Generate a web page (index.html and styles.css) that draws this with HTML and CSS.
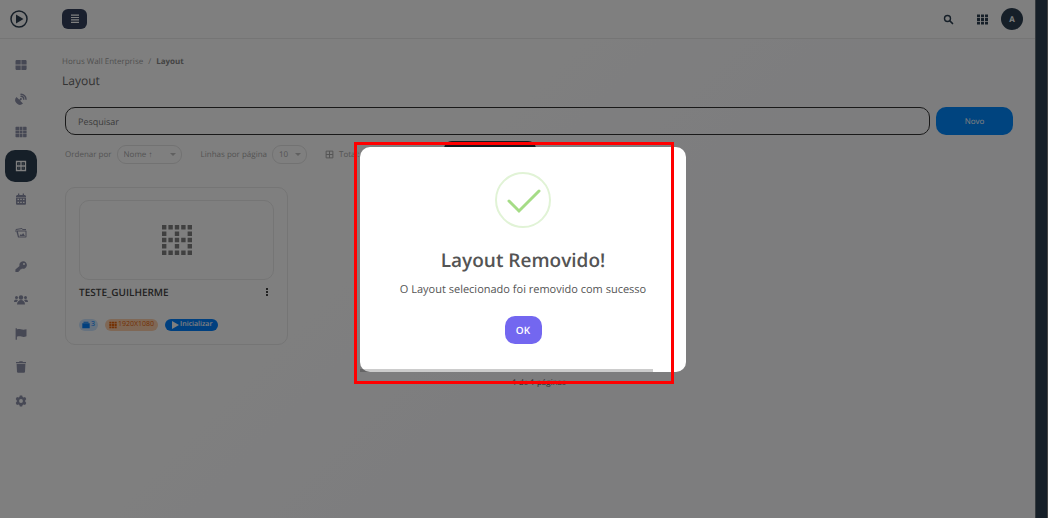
FILE: index.html
```html
<!DOCTYPE html>
<html lang="pt-br">
<head>
  <meta charset="UTF-8">
  <meta name="viewport" content="width=device-width, initial-scale=1.0">
  <title>Layout</title>
  <link rel="stylesheet" href="styles.css">
</head>
<body>
  <div class="app">
    <header class="topbar">
      <a href="#" class="logo" aria-label="Horus Wall">
        <svg viewBox="0 0 18 18"><circle cx="9" cy="9" r="8" fill="none" stroke="currentColor" stroke-width="1.5"/><path d="M6 4.5v9L13.5 9z"/></svg>
      </a>
      <button class="menu-btn" aria-label="Menu">
        <svg viewBox="0 0 10 10"><path d="M1 .5h8v1.200H1zM1 2.900h8v1.200H1zM1 5.300h8v1.200H1zM1 7.700h8v1.200H1z"/></svg>
      </button>
      <div class="top-actions">
        <button class="icon-btn" aria-label="Buscar">
          <svg viewBox="0 0 11 11"><circle cx="4.500" cy="4.500" r="3" fill="none" stroke="currentColor" stroke-width="1.400"/><path d="M7 7l2.500 2.500" stroke="currentColor" stroke-width="1.700" stroke-linecap="round"/></svg>
        </button>
        <button class="icon-btn" aria-label="Aplicativos">
          <svg viewBox="0 0 11 11"><path d="M0 .500h3v2.800H0zM4 .5h3v2.800H4zM8 .5h3v2.800H8zM0 4.100h3v2.800H0zM4 4.100h3v2.800H4zM8 4.100h3v2.800H8zM0 7.700h3v2.800H0zM4 7.700h3v2.800H4zM8 7.700h3v2.800H8z"/></svg>
        </button>
        <button class="avatar">A</button>
      </div>
    </header>

    <nav class="sidebar">
      <a href="#" aria-label="Painel"><svg viewBox="0 0 12 12"><path d="M1.300 1h4.400v4.600H.5V1.800zM6.400 1h4.400l.8.8v3.800H6.400zM.5 6.400h5.200V11H1.300l-.8-.8zM6.400 6.400h5.200v3.800l-.8.8H6.400z"/></svg></a>
      <a href="#" aria-label="Antena"><svg viewBox="0 0 12 12"><path d="M1.500 4a4.600 4.600 0 0 0 6.500 6.500L5.200 7.700l.7-.6a1 1 0 1 0-1-1l-.6.700z"/><path d="M6 3.300A3 3 0 0 1 8.800 6.200M6 1.200a5 5 0 0 1 5 5" fill="none" stroke="currentColor" stroke-width="1.400" stroke-linecap="round"/></svg></a>
      <a href="#" aria-label="Grade"><svg viewBox="0 0 12 12"><path d="M1 .8h3v3.100H.5V1.300zM4.500.8h3v3.100h-3zM8.100.8h3l.5.5v2.600H8.100zM.5 4.500H4v3H.5zM4.500 4.500h3v3h-3zM8.100 4.500h3.500v3H8.100zM.5 8.100H4v3.100H1l-.5-.5zM4.500 8.100h3v3.100h-3zM8.100 8.100h3.500v2.600l-.5.5h-3z"/></svg></a>
      <a href="#" class="active" aria-label="Layout"><svg viewBox="0 0 12 12"><path d="M1.500 1.500h9v9h-9zM6 1.500v9M1.500 6h9" fill="none" stroke="currentColor" stroke-width="1.300"/><path d="M3.400 3.400h1v1h-1zM7.600 3.400h1v1h-1zM3.400 7.600h1v1h-1zM7.600 7.600h1v1h-1z"/></svg></a>
      <a href="#" aria-label="Agenda"><svg viewBox="0 0 12 12"><path fill-rule="evenodd" d="M3 .5h1.300V2h3.400V.5H9V2h1l1 1v1H1V3l1-1h1zM1 4.600h10V11l-.6.700H1.600L1 11zM2.500 5.700v1.200H4V5.700zM5.200 5.700v1.200h1.600V5.700zM8 5.700v1.200h1.500V5.700zM2.500 8.800V10H4V8.800zM5.200 8.800V10h1.600V8.800zM8 8.800V10h1.500V8.800z"/></svg></a>
      <a href="#" aria-label="Imagens"><svg viewBox="0 0 12 12"><path d="M1 5V2.500l6-1 .5 1H11" fill="none" stroke="currentColor"/><path fill-rule="evenodd" d="M2 3.500h9l.5.500v6l-.5.500H3L1.500 5zM3 5l1 4.500h6.500v-5H3zM4.500 9l1.300-2 1 1 1.300-2L10 9z"/></svg></a>
      <a href="#" aria-label="Chaves"><svg viewBox="0 0 12 12"><path fill-rule="evenodd" d="M8 .3a3.700 3.700 0 1 1-1 7.200L6 8.600H4.900v1.200H3.700v1.300H.4V8.400L4.500 5A3.700 3.700 0 0 1 8 .3zM9 2a1 1 0 1 0 0 2 1 1 0 0 0 0-2z"/></svg></a>
      <a href="#" aria-label="Usuários"><svg class="wide" viewBox="0 0 14 12"><circle cx="7" cy="3.500" r="2.200"/><circle cx="2.500" cy="3.500" r="1.500"/><circle cx="11.500" cy="3.500" r="1.500"/><path d="M3 10.500c0-6 8-6 8 0zM0 8c0-3 2.300-3 4-2L2.600 8zM14 8c0-3-2.300-3-4-2l1.400 2z"/></svg></a>
      <a href="#" aria-label="Marcadores"><svg viewBox="0 0 12 12"><path d="M.6.3h1.300v1.200c3-1.300 4.500 1.200 9.600-.2v7c-4 1.800-5.500-.8-9.600.4v3H.6z"/></svg></a>
      <a href="#" aria-label="Lixeira"><svg viewBox="0 0 12 12"><path d="M1 1h3l.6-.7h2.800L8 1h3v1.300H1zM1.600 3h8.800L10 11l-.7.700H2.700L2 11z"/></svg></a>
      <a href="#" aria-label="Configurações"><svg viewBox="0 0 12 12"><path fill-rule="evenodd" d="M4.800.5h2.400l.4 1.600.9.500 1.600-.5 1.200 2-1.100 1.300v1.200l1.100 1.300-1.200 2-1.600-.5-.9.500-.4 1.600H4.800l-.4-1.600-.9-.5-1.600.5-1.200-2 1.100-1.300V5.400L.7 4.100l1.200-2 1.600.5.900-.5zM6 4.100a1.900 1.900 0 1 0 0 3.800 1.900 1.900 0 0 0 0-3.800z"/></svg></a>
    </nav>

    <main class="content">
      <div class="breadcrumb"><a href="#">Horus Wall Enterprise</a><span>/</span><b>Layout</b></div>
      <h1>Layout</h1>

      <div class="search-row">
        <input type="text" class="search" placeholder="Pesquisar" aria-label="Pesquisar">
        <button class="btn-new">Novo</button>
      </div>

      <div class="filters">
        <label for="order">Ordenar por</label>
        <div class="select"><select id="order" class="order"><option>Nome ↑</option></select></div>
        <label for="rows" class="rows-label">Linhas por página</label>
        <div class="select"><select id="rows" class="rows"><option>10</option></select></div>
        <div class="total">
          <svg viewBox="0 0 12 12"><path d="M1.500 1.500h9v9h-9zM6 1.500v9M1.500 6h9" fill="none" stroke="currentColor" stroke-width="1.300"/></svg>
          Total: 1
        </div>
      </div>

      <div class="card">
        <div class="preview">
          <svg viewBox="0 0 30 30">
            <path d="M0 2.300h30M0 15h30M0 27.700h30" fill="none" stroke="currentColor" stroke-width="4.400" stroke-dasharray="4.400 2"/>
            <path d="M0 8.700h30M0 21.300h30" fill="none" stroke="currentColor" stroke-width="4.400" stroke-dasharray="4.400 8.400"/>
          </svg>
        </div>
        <div class="card-title">
          <h2>TESTE_GUILHERME</h2>
          <button class="dots" aria-label="Opções"><svg viewBox="0 0 4 10"><path d="M1 1h2v2H1zM1 4h2v2H1zM1 7h2v2H1z"/></svg></button>
        </div>
        <div class="badges">
          <span class="badge blue"><svg viewBox="0 0 8 8"><path d="M1.500.8h5v1h-5zM.3 2.300h7.400v4.900H.3z"/></svg>3</span>
          <span class="badge orange"><svg viewBox="0 0 8 8"><path d="M.3.800h2.100v1.800H.3zM2.900.8h2.200v1.800H2.900zM5.600.8h2.100v1.800H5.600zM.3 3.100h2.100v1.900H.3zM2.900 3.100h2.200v1.900H2.900zM5.600 3.100h2.100v1.900H5.600zM.3 5.500h2.100v1.800H.3zM2.900 5.500h2.200v1.800H2.900zM5.600 5.500h2.100v1.800H5.600z"/></svg>1920X1080</span>
          <button class="badge start"><svg viewBox="0 0 8 8"><path d="M1 0v8l7-4z"/></svg>Inicializar</button>
        </div>
      </div>

      <div class="pagination">1 de 1 páginas</div>
    </main>
    <div class="scroll-strip"></div>
  </div>

  <div class="overlay">
    <div class="modal-wrap">
      <div class="tooltip"></div>
      <div class="modal" role="dialog" aria-labelledby="modal-title">
        <svg class="success" viewBox="0 0 56 56"><circle cx="28" cy="28" r="27" fill="none" stroke="#e1f3d6" stroke-width="2"/><path d="M14 29l10 10 20-20" fill="none" stroke="#a5dc86" stroke-width="3" stroke-linecap="round"/></svg>
        <h2 id="modal-title">Layout Removido!</h2>
        <p>O Layout selecionado foi removido com sucesso</p>
        <button class="btn-ok">OK</button>
        <div class="timer"></div>
      </div>
      <div class="highlight"></div>
    </div>
  </div>
</body>
</html>
```
FILE: styles.css
```css
* {
    box-sizing: border-box;
}
body {
    margin: 0;
    font-family: "Open Sans", "Noto Sans", sans-serif;
    font-size: 8px;
    color: #777;
    background-color: #fff;
    text-rendering: geometricPrecision;
}
button, input, select {
    font-family: inherit;
    text-rendering: inherit;
    color: inherit;
    border: none;
    background: none;
    padding: 0;
    margin: 0;
}
button {
    cursor: pointer;
}
a {
    color: inherit;
    text-decoration: none;
}
svg {
    display: block;
    flex-shrink: 0;
    fill: currentColor;
}
h1, h2, p {
    margin: 0;
}
.app {
    display: grid;
    grid-template-columns: 41px 1fr 13px;
    grid-template-rows: 39px 1fr;
    min-height: 100vh;
    background: linear-gradient(135deg, #fff 35%, #fafafd 60%);
}

/* topbar */
.topbar {
    grid-column: 1 / 3;
    display: flex;
    align-items: center;
    padding: 0 12px 0 10px;
    border-bottom: 1px solid #eaeaea;
    color: #2c3e50;
    background-color: #fff;
}
.logo svg {
    width: 18px;
    height: 18px;
}
.menu-btn {
    width: 25px;
    height: 20px;
    margin-left: 34px;
    border-radius: 6px;
    background-color: #34405c;
    color: #fff;
    display: flex;
    align-items: center;
    justify-content: center;
}
.menu-btn svg {
    width: 10px;
    height: 10px;
}
.top-actions {
    display: flex;
    align-items: center;
    margin-left: auto;
}
.icon-btn {
    margin-right: 23px;
}
.icon-btn + .icon-btn {
    margin-right: 13px;
}
.icon-btn svg {
    width: 11px;
    height: 11px;
}
.avatar {
    width: 22px;
    height: 22px;
    border-radius: 50%;
    background-color: #2c3e50;
    color: #fff;
    font-size: 8px;
    font-weight: bold;
}

/* sidebar */
.sidebar {
    height: 368px;
    margin-top: 10px;
    display: flex;
    flex-direction: column;
    justify-content: space-between;
    align-items: center;
    color: #8d90a8;
}
.sidebar a {
    width: 32px;
    height: 32px;
    border-radius: 10px;
    display: flex;
    align-items: center;
    justify-content: center;
}
.sidebar .active {
    background-color: #2c3e50;
    color: #fff;
}
.sidebar svg {
    width: 12px;
    height: 12px;
}
.sidebar .wide {
    width: 14px;
}
.scroll-strip {
    grid-column: 3;
    grid-row: 1 / 3;
    background-color: #2c3e50;
    border-left: 1px solid #6b747c;
    border-right: 1px solid #8a8a8a;
}

/* content */
.content {
    padding: 17px 22px 0 24px;
}
.breadcrumb {
    display: flex;
    gap: 5px;
    margin-left: -3px;
    font-size: 8px;
    line-height: 12px;
    color: #a0a0a0;
}
.breadcrumb b {
    color: #888;
}
h1 {
    margin: 5px 0 0 -3px;
    font-size: 12px;
    line-height: 16px;
    font-weight: normal;
    color: #666;
}
.search-row {
    display: flex;
    gap: 6px;
    margin-top: 18px;
}
.search {
    flex: 1;
    height: 28px;
    padding: 0 12px;
    border: 1px solid #333;
    border-radius: 10px;
    font-size: 9px;
}
.search::placeholder {
    color: #777;
}
.btn-new {
    width: 77px;
    height: 28px;
    border-radius: 10px;
    background-color: #0088ff;
    color: #fff;
    font-size: 8px;
}
.filters {
    display: flex;
    align-items: center;
    margin-top: 10px;
    color: #a8a8a8;
}
.select {
    position: relative;
    margin-left: 5px;
}
.select::after {
    content: "";
    position: absolute;
    right: 6px;
    top: 8px;
    border: 3px solid transparent;
    border-top-color: #c0c0c0;
    pointer-events: none;
}
select {
    appearance: none;
    height: 19px;
    padding: 0 6px;
    border: 1px solid #e4e4e4;
    border-radius: 9px;
    font-size: 8px;
}
.order {
    width: 65px;
}
.rows {
    width: 35px;
}
.rows-label {
    margin-left: 19px;
}
.total {
    display: flex;
    align-items: center;
    gap: 5px;
    margin-left: 18px;
}
.total svg {
    width: 9px;
    height: 9px;
}

/* card */
.card {
    width: 223px;
    margin-top: 23px;
    padding: 12px 13px 13px;
    border: 1px solid #eaeaea;
    border-radius: 10px;
    background-color: #fff;
}
.preview {
    height: 80px;
    border: 1px solid #eaeaea;
    border-radius: 10px;
    display: flex;
    align-items: center;
    justify-content: center;
    color: #808080;
}
.preview svg {
    width: 30px;
    height: 30px;
}
.card-title {
    display: flex;
    align-items: center;
    justify-content: space-between;
    margin-top: 4px;
    padding-right: 5px;
    color: #444;
}
.card-title h2 {
    font-size: 10px;
    line-height: 16px;
    font-weight: 600;
}
.dots svg {
    width: 4px;
    height: 10px;
}
.badges {
    display: flex;
    align-items: center;
    gap: 7px;
    margin-top: 19px;
}
.badge {
    display: flex;
    align-items: center;
    gap: 1px;
    height: 12px;
    padding: 0 3px;
    border-radius: 6px;
    font-size: 7px;
    line-height: 12px;
}
.badge svg {
    width: 8px;
    height: 8px;
}
.blue {
    background-color: #cce5ff;
    color: #0080ff;
}
.orange {
    padding: 0 4px;
    background-color: #ffd0ac;
    color: #e8650a;
}
.start {
    padding: 0 6px;
    background-color: #0080ff;
    color: #fff;
    font-weight: 600;
}
.pagination {
    margin-top: 32px;
    text-align: center;
    line-height: 12px;
    color: #555;
}

/* modal */
.overlay {
    position: fixed;
    inset: 0;
    display: flex;
    align-items: center;
    justify-content: center;
    padding: 1px 2px 0 0;
    background-color: rgba(0, 0, 0, 0.5);
}
.modal-wrap {
    position: relative;
    width: 326px;
}
.tooltip {
    position: absolute;
    top: -6px;
    left: 84px;
    width: 92px;
    height: 20px;
    border-radius: 8px;
    background-color: #161a20;
}
.modal {
    position: relative;
    display: flex;
    flex-direction: column;
    align-items: center;
    padding: 25px 16px 28px;
    border-radius: 10px;
    background-color: #fff;
    color: #545454;
}
.success {
    width: 56px;
    height: 56px;
}
.modal h2 {
    margin-top: 18px;
    font-size: 19px;
    line-height: 28px;
    font-weight: 600;
}
.modal p {
    margin-top: 7px;
    font-size: 11px;
    line-height: 18px;
}
.btn-ok {
    width: 37px;
    height: 28px;
    margin-top: 17px;
    border-radius: 10px;
    background-color: #7367f0;
    color: #fff;
    font-size: 10px;
    font-weight: 600;
}
.timer {
    position: absolute;
    left: 0;
    bottom: 0;
    width: 90%;
    height: 3px;
    background-color: rgba(0, 0, 0, 0.2);
}
.highlight {
    position: absolute;
    inset: -5px 12px -12px -6px;
    border: 3px solid #f00;
}
```
